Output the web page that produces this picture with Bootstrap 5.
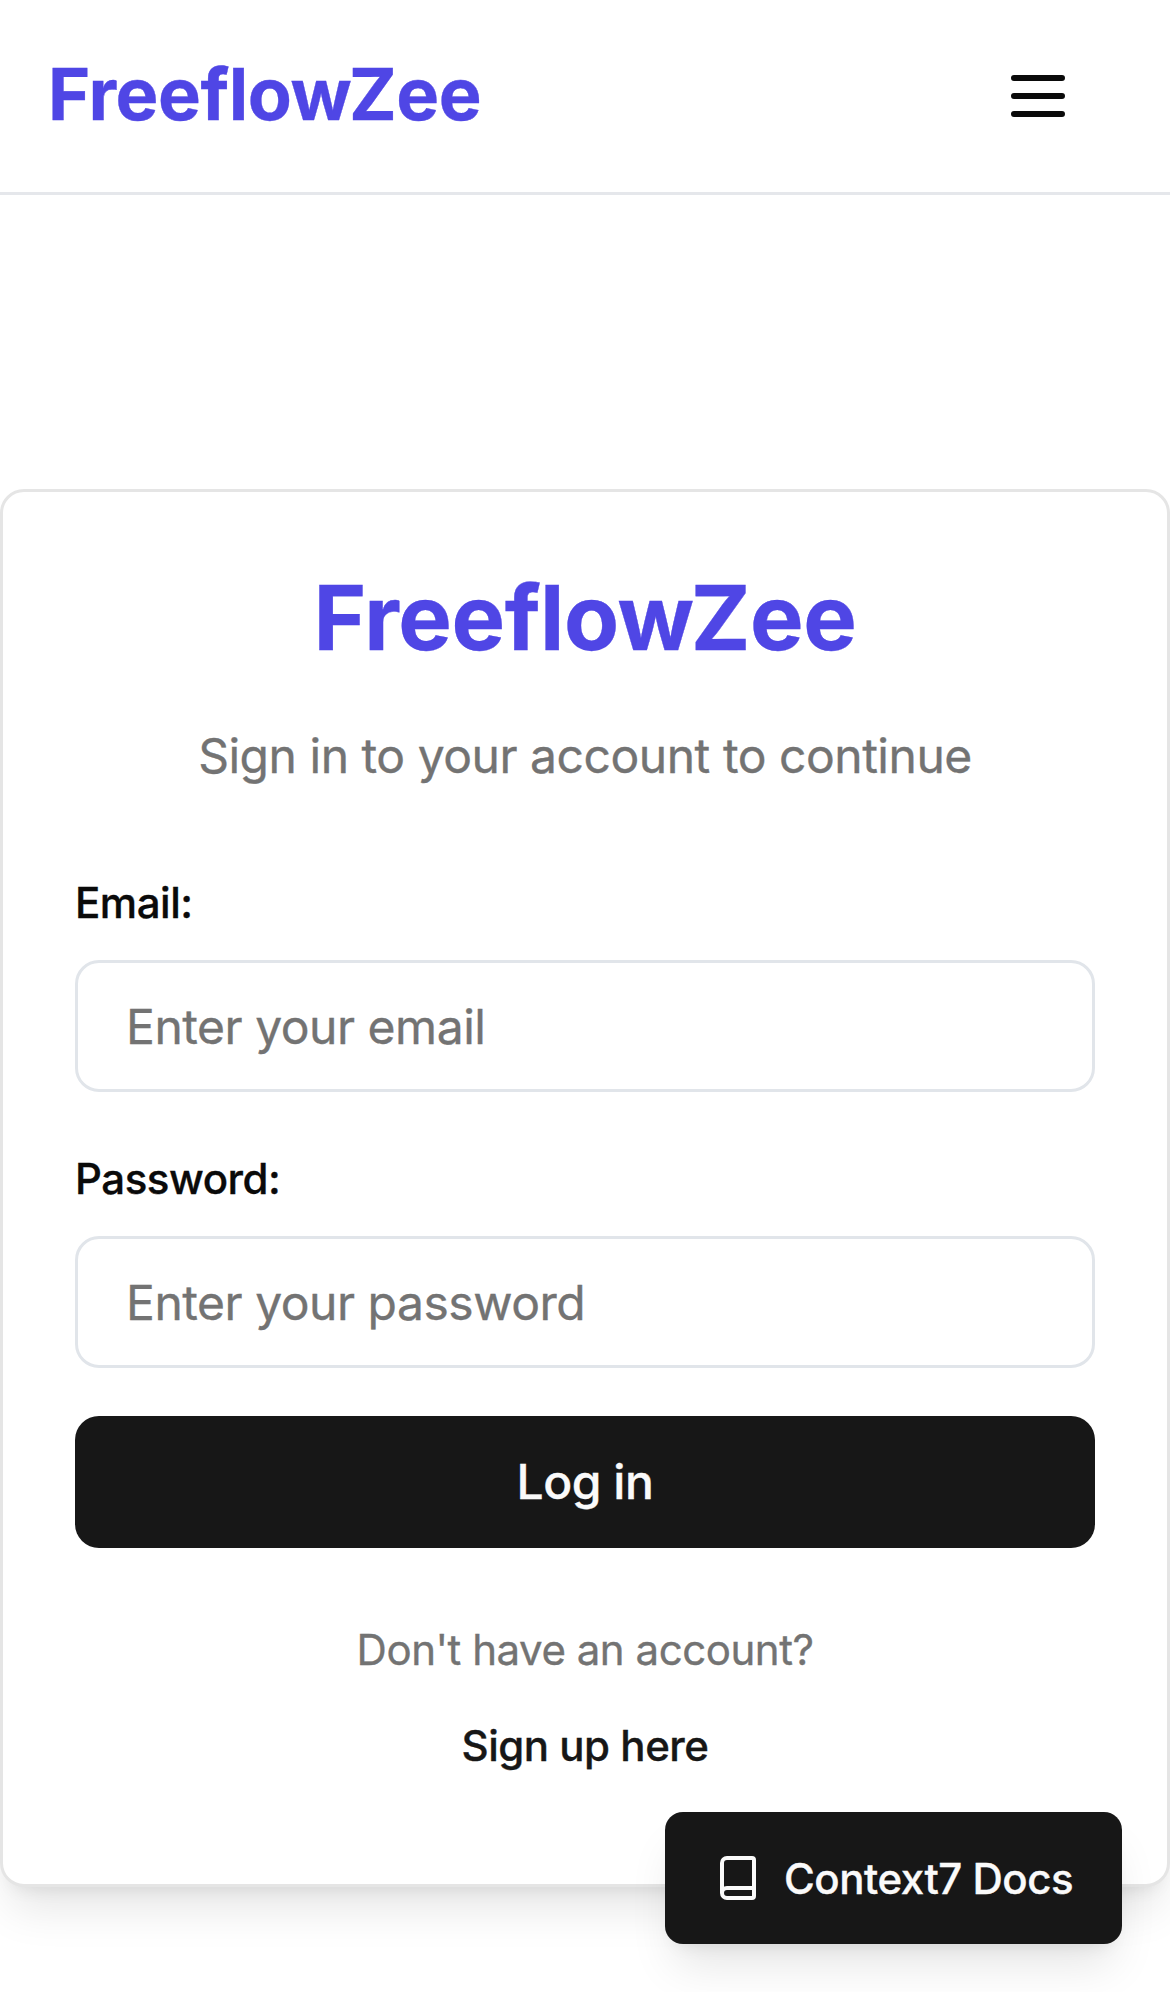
<!DOCTYPE html>
<html lang="en">
<head>
<meta charset="utf-8">
<meta name="viewport" content="width=device-width, initial-scale=1">
<title>FreeflowZee</title>
<link rel="stylesheet" href="https://cdn.jsdelivr.net/npm/bootstrap@5.3.0/dist/css/bootstrap.min.css">
<style>
body { font-family: Inter, sans-serif; color: #0a0a0a; min-height: 1992px; overflow: hidden; letter-spacing: -.47px; -webkit-text-stroke: .35px; }
.site-header { height: 195px; padding: 0 48px; border-bottom: 3px solid #e5e7eb; }
.brand-text { color: #4f46e5; font-weight: 700; letter-spacing: -.42px; }
.site-header .brand-text { font-size: 72px; line-height: 96px; margin-top: -5px; }
.menu-btn { padding: 0 48px; border: 0; line-height: 0; color: #0a0a0a; }
.login-card { margin-top: 294px; height: 1398px; padding: 72px; border: 3px solid #e5e5e5; border-radius: 24px; box-shadow: 0 30px 45px -9px rgba(0,0,0,.1), 0 12px 18px -12px rgba(0,0,0,.1); }
.login-card .brand-text { font-size: 90px; line-height: 108px; }
.subtitle { font-size: 48px; line-height: 72px; color: #737373; margin-top: 48px; }
.login-form { margin-top: 90px; gap: 66px; }
.field-label { font-size: 42px; line-height: 42px; font-weight: 500; margin-bottom: 36px; display: block; }
.login-card .form-control { height: 132px; padding: 0 48px; border: 3px solid #e1e5ea; border-radius: 24px; font-size: 48px; line-height: 72px; letter-spacing: inherit; }
.login-card .form-control::placeholder { color: #737373; opacity: 1; }
.dark-btn, .dark-btn:hover { height: 132px; background: #171717; color: #fafafa; border: 0; font-weight: 500; letter-spacing: -.47px; }
.submit-btn { border-radius: 24px; font-size: 48px; margin-top: -18px; }
.foot { font-size: 42px; line-height: 60px; margin-top: 72px; gap: 36px; }
.foot-note { color: #737373; }
.foot a { color: #171717; font-weight: 500; }
.docs-btn { right: 48px; bottom: 48px; width: 457px; border-radius: 18px; padding: 0 48px 0 49px; gap: 22px; font-size: 42px; box-shadow: 0 30px 45px -9px rgba(0,0,0,.1), 0 12px 18px -12px rgba(0,0,0,.1); }
</style>
</head>
<body class="bg-white position-relative">
<header class="site-header d-flex align-items-center justify-content-between bg-white">
  <a href="#" class="brand-text text-decoration-none">FreeflowZee</a>
  <button class="btn menu-btn" type="button" aria-label="Menu">
    <svg width="72" height="72" viewBox="0 0 24 24" fill="none" stroke="currentColor" stroke-width="2" stroke-linecap="round"><path d="M4 6h16M4 12h16M4 18h16"/></svg>
  </button>
</header>
<main>
  <div class="card login-card bg-white">
    <div class="text-center">
      <h1 class="brand-text mb-0">FreeflowZee</h1>
      <p class="subtitle mb-0">Sign in to your account to continue</p>
    </div>
    <form class="login-form d-flex flex-column">
      <div>
        <label class="field-label" for="email">Email:</label>
        <input class="form-control" id="email" type="email" placeholder="Enter your email">
      </div>
      <div>
        <label class="field-label" for="password">Password:</label>
        <input class="form-control" id="password" type="password" placeholder="Enter your password">
      </div>
      <button class="btn dark-btn submit-btn w-100" type="button">Log in</button>
    </form>
    <div class="foot d-flex flex-column align-items-center">
      <p class="foot-note mb-0">Don't have an account?</p>
      <a href="#" class="text-decoration-none">Sign up here</a>
    </div>
  </div>
</main>
<button class="btn dark-btn docs-btn position-absolute d-flex align-items-center text-nowrap" type="button">
  <svg class="flex-shrink-0" width="48" height="48" viewBox="0 0 24 24" fill="none" stroke="currentColor" stroke-width="2" stroke-linecap="round" stroke-linejoin="round"><path d="M4 19.5v-15A2.5 2.5 0 0 1 6.5 2H19a1 1 0 0 1 1 1v18a1 1 0 0 1-1 1H6.5a1 1 0 0 1 0-5H20"/></svg>
  Context7 Docs
</button>
<script src="https://cdn.jsdelivr.net/npm/bootstrap@5.3.0/dist/js/bootstrap.bundle.min.js"></script>
</body>
</html>
